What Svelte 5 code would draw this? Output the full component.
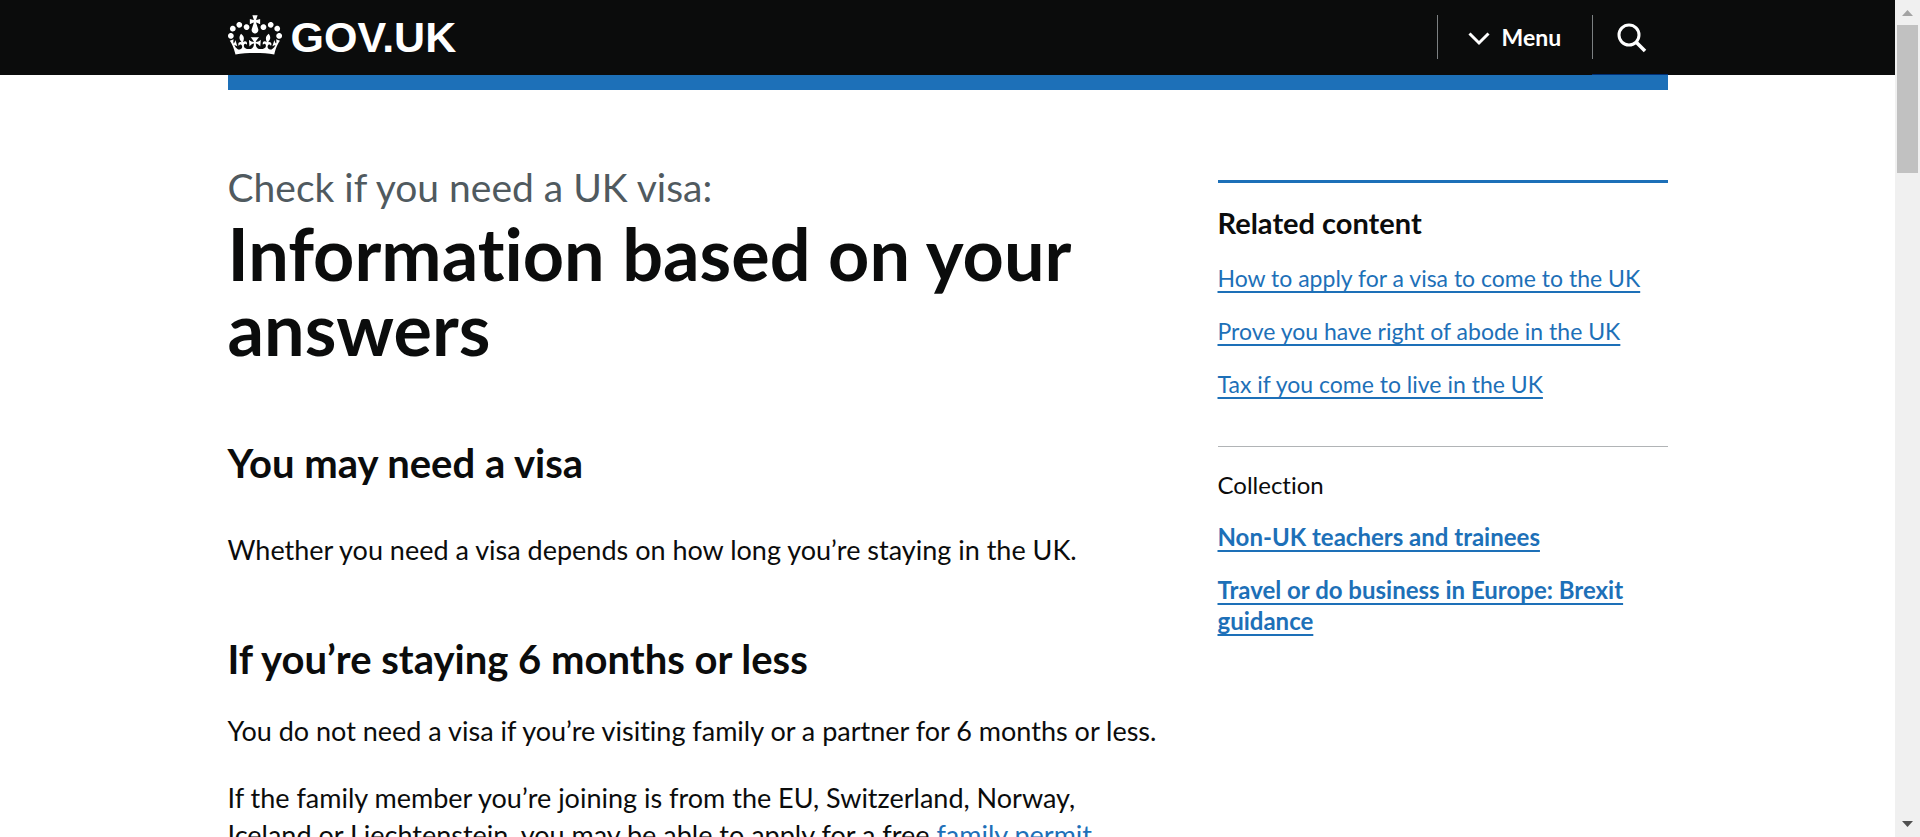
<script>
  const related = [
    'How to apply for a visa to come to the UK',
    'Prove you have right of abode in the UK',
    'Tax if you come to live in the UK'
  ];
  const collection = [
    'Non-UK teachers and trainees',
    'Travel or do business in Europe: Brexit guidance'
  ];
</script>

<div class="window">
  <div class="page">
    <header>
      <div class="container bar">
        <a class="logo" href="#home" aria-label="GOV.UK">
          <svg width="54" height="40" viewBox="0 0 132 97" aria-hidden="true">
            <path fill="currentColor" fill-rule="evenodd" d="M25 30.2c3.5 1.5 7.7-.2 9.1-3.7 1.5-3.6-.2-7.8-3.9-9.2-3.6-1.4-7.6.3-9.1 3.9-1.4 3.5.3 7.5 3.9 9zM9 39.5c3.6 1.5 7.8-.2 9.2-3.7 1.5-3.6-.2-7.8-3.9-9.1-3.6-1.5-7.6.2-9.1 3.8-1.4 3.5.3 7.5 3.8 9zM4.4 57.2c3.5 1.5 7.7-.2 9.1-3.8 1.5-3.6-.2-7.7-3.9-9.1-3.5-1.5-7.6.3-9.1 3.8-1.4 3.5.3 7.6 3.9 9.1zm38.3-21.4c3.5 1.5 7.7-.2 9.1-3.8 1.5-3.6-.2-7.7-3.9-9.1-3.6-1.5-7.6.3-9.1 3.8-1.3 3.6.4 7.7 3.9 9.1zm64.4-5.6c-3.6 1.5-7.8-.2-9.1-3.7-1.5-3.6.2-7.8 3.8-9.2 3.6-1.4 7.7.3 9.2 3.9 1.3 3.5-.4 7.5-3.9 9zm15.9 9.3c-3.6 1.5-7.7-.2-9.1-3.7-1.5-3.6.2-7.8 3.7-9.1 3.6-1.5 7.7.2 9.2 3.8 1.5 3.5-.3 7.5-3.8 9zm4.7 17.7c-3.6 1.5-7.8-.2-9.2-3.8-1.5-3.6.2-7.7 3.9-9.1 3.6-1.5 7.7.3 9.2 3.8 1.3 3.5-.4 7.6-3.9 9.1zM89.3 35.8c-3.6 1.5-7.8-.2-9.2-3.8-1.4-3.6.2-7.7 3.9-9.1 3.6-1.5 7.7.3 9.2 3.8 1.4 3.6-.3 7.7-3.9 9.1zM69.7 17.7l8.9 4.7V9.3l-8.9 2.8c-.2-.3-.5-.6-.9-.9L72.4 0H59.6l3.5 11.2c-.3.3-.6.5-.9.9l-8.8-2.8v13.1l8.8-4.7c.3.3.6.7.9.9l-5 15.4v.1c-.2.8-.4 1.6-.4 2.4 0 4.1 3.1 7.5 7 8.1h.2c.3 0 .7.1 1 .1.4 0 .7 0 1-.1h.2c4-.6 7.1-4.1 7.1-8.1 0-.8-.1-1.7-.4-2.4V34l-5.1-15.4c.4-.2.7-.6 1-.9zM66 92.8c16.9 0 32.8 1.1 47.1 3.2 4-16.9 8.9-26.7 14-33.5l-9.6-3.4c1 4.9 1.1 7.2 0 10.2-1.5-1.4-3-4.3-4.2-8.7L108.6 76c2.8-2 5-3.2 7.5-3.3-4.4 9.4-10 11.9-13.6 11.2-4.3-.8-6.3-4.6-5.6-7.9 1-4.7 5.7-5.9 8-.5 4.3-8.7-3-11.4-7.6-8.8 7.1-7.2 7.9-13.5 2.1-21.1-8 6.1-8.1 12.3-4.5 20.8-4.7-5.4-12.1-2.5-9.5 6.2 3.4-5.2 7.9-2 7.2 3.1-.6 4.3-6.4 7.8-13.5 7.2-10.3-.9-10.9-8-11.2-13.8 2.5-.5 7.1 1.8 11 7.3L80.2 60c-4.1 4.4-8 5.3-12.3 5.4 1.4-4.4 8-11.6 8-11.6H55.5s6.4 7.2 7.9 11.6c-4.2-.1-8-1-12.3-5.4l1.4 16.4c3.9-5.5 8.5-7.7 10.9-7.3-.3 5.8-.9 12.8-11.1 13.8-7.2.6-12.9-2.9-13.5-7.2-.7-5 3.8-8.3 7.1-3.1 2.7-8.7-4.6-11.6-9.4-6.2 3.7-8.5 3.6-14.7-4.6-20.8-5.8 7.6-5 13.9 2.2 21.1-4.7-2.6-11.9.1-7.7 8.8 2.3-5.5 7.1-4.2 8.1.5.7 3.3-1.3 7.1-5.7 7.9-3.5.7-9-1.8-13.5-11.2 2.5.1 4.7 1.3 7.5 3.3l-4.7-15.4c-1.2 4.4-2.7 7.2-4.3 8.7-1.1-3-.9-5.3 0-10.2l-9.5 3.4c5 6.9 9.9 16.7 14 33.5 14.8-2.1 30.8-3.2 47.7-3.2z" />
          </svg>
          <span>GOV.UK</span>
        </a>
        <nav aria-label="Site">
          <button class="menu" type="button">
            <svg width="22" height="14" viewBox="0 0 22 14" aria-hidden="true">
              <path d="M1.5 1.5 11 11 20.500 1.500" fill="none" stroke="currentColor" stroke-width="3" />
            </svg>
            <span>Menu</span>
          </button>
          <button class="search" type="button" aria-label="Search GOV.UK">
            <svg width="30" height="30" viewBox="0 0 30 30" aria-hidden="true">
              <circle cx="12" cy="12" r="10" fill="none" stroke="currentColor" stroke-width="3" />
              <path d="M19 19 28 28" fill="none" stroke="currentColor" stroke-width="3.500" />
            </svg>
          </button>
        </nav>
      </div>
    </header>
    <div class="container stripe"></div>

    <div class="container columns">
      <main>
        <h1>
          <span class="caption">Check if you need a UK visa:</span>
          Information based on your answers
        </h1>
        <h2>You may need a visa</h2>
        <p class="lead">Whether you need a visa depends on how long you’re staying in the UK.</p>
        <h2>If you’re staying 6 months or less</h2>
        <p>You do not need a visa if you’re visiting family or a partner for 6 months or less.</p>
        <p>If the family member you’re joining is from the EU, Switzerland, Norway,<br />Iceland or Liechtenstein, you may be able to apply for a free <a href="#permit">family permit</a></p>
      </main>

      <aside>
        <section class="related">
          <h2>Related content</h2>
          <ul>
            {#each related as item}
              <li><a href="#related">{item}</a></li>
            {/each}
          </ul>
        </section>
        <section class="collection">
          <h3>Collection</h3>
          <ul>
            {#each collection as item}
              <li><a href="#collection">{item}</a></li>
            {/each}
          </ul>
        </section>
      </aside>
    </div>
  </div>

  <div class="scrollbar" aria-hidden="true">
    <svg width="11" height="6" viewBox="0 0 11 6"><path d="M5.500 0 11 6H0z" fill="#a3a3a3" /></svg>
    <div class="track"><div class="thumb"></div></div>
    <svg width="11" height="6" viewBox="0 0 11 6"><path d="M0 0h11L5.500 6z" fill="#505050" /></svg>
  </div>
</div>

<style>
  :global(body) {
    margin: 0;
    background: #fff;
  }

  .window {
    display: flex;
    height: 100vh;
    overflow: hidden;
    color: #0b0c0c;
    font-family: Lato, "Liberation Sans", sans-serif;
    font-size: 27px;
    font-variant-ligatures: none;
    line-height: 37px;
  }

  .page {
    flex: 1;
    min-width: 0;
    overflow: hidden;
  }

  .container {
    max-width: 1440px;
    margin: 0 auto;
  }

  header {
    background: #0b0c0c;
  }

  .bar {
    display: flex;
    justify-content: space-between;
    height: 75px;
  }

  .logo {
    display: flex;
    align-items: flex-start;
    gap: 9px;
    padding-top: 15px;
    color: #fff;
    font-family: "Liberation Sans", Arial, sans-serif;
    font-size: 43px;
    font-weight: 700;
    line-height: 44px;
    text-decoration: none;
  }

  nav {
    display: flex;
  }

  button {
    display: flex;
    align-items: flex-start;
    border: 0;
    padding: 15px 0 0;
    background: none;
    color: #fff;
    font-family: inherit;
    font-size: 23px;
    font-weight: 700;
    line-height: 44px;
  }

  button::before {
    content: "";
    width: 1px;
    height: 44px;
    background: #7c8082;
  }

  .menu {
    width: 155px;
  }

  .menu svg {
    margin: 17px 12px 0 30px;
  }

  .search {
    width: 76px;
    box-shadow: inset 0 -1px #003078;
  }

  .search svg {
    margin: 8px 0 0 24px;
  }

  .stripe {
    height: 15px;
    background: #1d70b8;
  }

  .columns {
    display: grid;
    grid-template-columns: minmax(0, 945fr) minmax(0, 450fr);
    gap: 45px;
    padding-top: 75px;
  }

  h1,
  h2,
  h3,
  p,
  ul {
    margin: 0;
    padding: 0;
  }

  h1 {
    margin-bottom: 75px;
    font-size: 72px;
    line-height: 75px;
  }

  .caption {
    display: block;
    margin-bottom: 7px;
    color: #505a5f;
    font-size: 39px;
    font-weight: 400;
    line-height: 44px;
  }

  main h2 {
    margin-bottom: 30px;
    font-size: 40px;
    line-height: 45px;
  }

  p {
    margin-bottom: 30px;
  }

  .lead {
    margin: 45px 0 69px;
  }

  a {
    color: #1d70b8;
    text-decoration-thickness: 2px;
    text-underline-offset: 4px;
    text-decoration-skip-ink: none;
  }

  aside {
    padding-top: 15px;
    font-size: 24px;
    line-height: 31px;
  }

  .related {
    border-top: 3px solid #1d70b8;
    padding: 21px 0 46px;
  }

  .related h2 {
    margin-bottom: 22px;
    font-size: 29px;
    line-height: 37px;
  }

  .related ul {
    font-size: 23px;
  }

  ul {
    display: grid;
    gap: 22px;
    list-style: none;
  }

  .collection {
    border-top: 1px solid #b1b4b6;
    padding-top: 22px;
  }

  h3 {
    margin-bottom: 21px;
    font-size: 24px;
    font-weight: 400;
  }

  .collection a {
    font-weight: 700;
  }

  .scrollbar {
    display: flex;
    flex-direction: column;
    align-items: center;
    width: 25px;
    box-sizing: border-box;
    padding: 10px 0;
    background: #f0f0f0;
  }

  .track {
    flex: 1;
    padding: 9px 0;
  }

  .thumb {
    width: 21px;
    height: 148px;
    background: #c1c1c1;
  }
</style>
